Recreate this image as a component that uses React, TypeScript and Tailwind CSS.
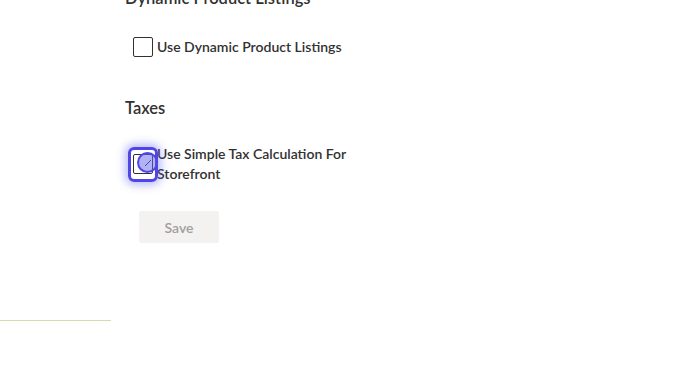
import React from 'react';

const Checkbox: React.FC<{ label: string; focused?: boolean }> = ({ label, focused }) => (
  <label className="flex items-center gap-[4px] w-[235px]">
    <span className="relative shrink-0 ml-[8px]">
      {focused && (
        <span className="absolute -left-[5px] -top-[7px] w-[30px] h-[35px] rounded-[6px] border-[3px] border-[#4f46e5] shadow-[0_0_8px_3px_rgba(99,102,241,0.45)]" />
      )}
      <span className="block w-[20px] h-[20px] border border-[#323130] rounded-[2px] bg-white" />
      {focused && (
        <span className="absolute left-[4px] -top-[2px] w-[21px] h-[21px] rounded-full border-2 border-[#4f46e5] bg-[#6366f1]/50 flex items-center justify-center">
          <svg width="10" height="10" viewBox="0 0 10 10">
            <path d="M2 8 L8 2" stroke="#4b4a8a" strokeWidth="1" />
          </svg>
        </span>
      )}
    </span>
    <span className="text-[14px] leading-[20px] text-[#323130] font-semibold">{label}</span>
  </label>
);

export default function App() {
  return (
    <div className="relative w-[677px] h-[377px] overflow-hidden bg-white" style={{ fontFamily: 'Lato, "Open Sans", sans-serif' }}>
      <div className="pl-[125px] -mt-[13px]">
        <h2 className="text-[16.5px] leading-[22px] font-semibold text-[#323130]">Dynamic Product Listings</h2>
        <div className="mt-[28px]">
          <Checkbox label="Use Dynamic Product Listings" />
        </div>
        <h2 className="mt-[40px] text-[16.5px] leading-[22px] font-semibold text-[#323130]">Taxes</h2>
        <div className="mt-[25px]">
          <Checkbox label="Use Simple Tax Calculation For Storefront" focused />
        </div>
        <button className="mt-[27px] ml-[14px] w-[80px] h-[32px] rounded-[2px] bg-[#f3f2f1] text-[14px] font-semibold text-[#a19f9d]">
          Save
        </button>
      </div>
      <div className="mt-[77px] w-[111px] h-px bg-[#d6dcb0]" />
    </div>
  );
}
